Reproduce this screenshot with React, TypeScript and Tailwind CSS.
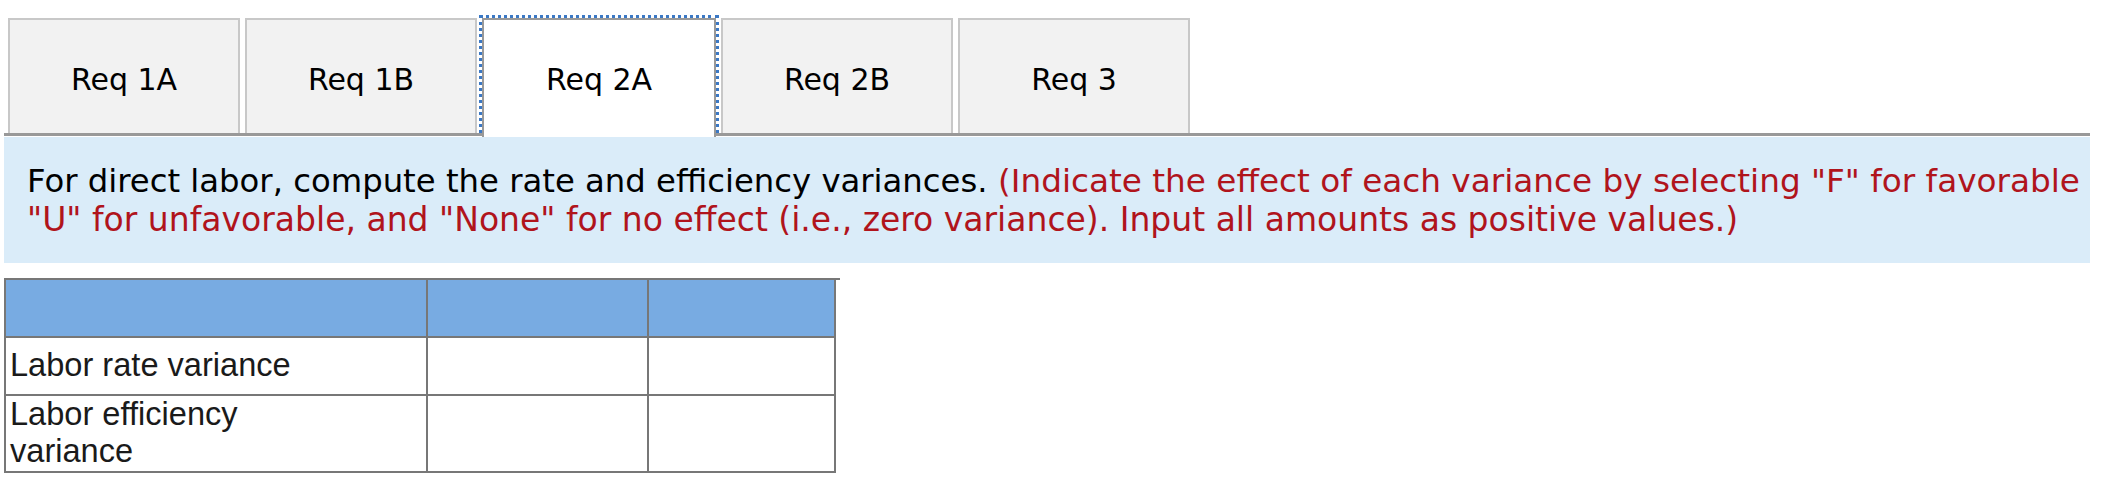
export default function App() {
  const tabs = ["Req 1A", "Req 1B", "Req 2A", "Req 2B", "Req 3"];
  return (
    <div className="w-[2110px] h-[490px] bg-white overflow-hidden pt-[18px] font-['DejaVu_Sans',sans-serif]">
      <div className="flex gap-[5px] pl-[8px] h-[115px] items-start">
        {tabs.map((t, i) =>
          i === 2 ? (
            <div
              key={t}
              className="relative z-10 w-[234px] h-[119px] bg-white border-2 border-b-0 border-[#999999] outline-[3px] outline-dotted outline-[#3b78c4] outline-offset-0 flex items-start justify-center pt-[42px] text-[30px] leading-[35px] text-black"
            >
              {t}
            </div>
          ) : (
            <div
              key={t}
              className="w-[232px] h-[115px] bg-[#f2f2f2] border-2 border-b-0 border-[#c8c8c8] flex items-start justify-center pt-[42px] text-[30px] leading-[35px] text-black"
            >
              {t}
            </div>
          )
        )}
      </div>
      <div className="ml-[4px] w-[2086px] h-[3px] bg-[#999999]" />
      <div className="relative z-20 ml-[4px] mt-[1px] w-[2086px] h-[126px] bg-[#daecf9] overflow-hidden pl-[23px] pt-[25px]">
        <p className="whitespace-nowrap text-[33px] leading-[38.7px] text-black">
          <span className="text-[32.3px]">For direct labor, compute the rate and efficiency variances.</span>{" "}
          <span className="text-[#b0141c] text-[32.7px]">
            (Indicate the effect of each variance by selecting "F" for favorable
          </span>
          <br />
          <span className="text-[#b0141c]">
            "U" for unfavorable, and "None" for no effect (i.e., zero variance). Input all amounts as positive values.)
          </span>
        </p>
      </div>
      <div className="mt-[15px] ml-[4px] w-[836px] border-t-2 border-[#777777] font-['Liberation_Sans',Arial,sans-serif] text-[32.6px] leading-[37px] text-[#1a1a1a]">
        <div className="w-[832px] border-l-2 border-r-2 border-b-2 border-[#777777]">
          <div className="flex h-[56px] bg-[#78abe2]">
            <div className="w-[422px] border-r-2 border-[#777777]" />
            <div className="w-[221px] border-r-2 border-[#777777]" />
            <div className="w-[185px]" />
          </div>
          <div className="flex h-[58px] border-t-2 border-[#777777]">
            <div className="w-[422px] border-r-2 border-[#777777] flex items-center pl-[4px] pb-[4px]">
              Labor rate variance
            </div>
            <div className="w-[221px] border-r-2 border-[#777777]" />
            <div className="w-[185px]" />
          </div>
          <div className="flex h-[77px] border-t-2 border-[#777777]">
            <div className="w-[422px] border-r-2 border-[#777777] flex items-center pl-[4px] pb-[4px]">
              <span>
                Labor efficiency
                <br />
                variance
              </span>
            </div>
            <div className="w-[221px] border-r-2 border-[#777777]" />
            <div className="w-[185px]" />
          </div>
        </div>
      </div>
    </div>
  );
}
